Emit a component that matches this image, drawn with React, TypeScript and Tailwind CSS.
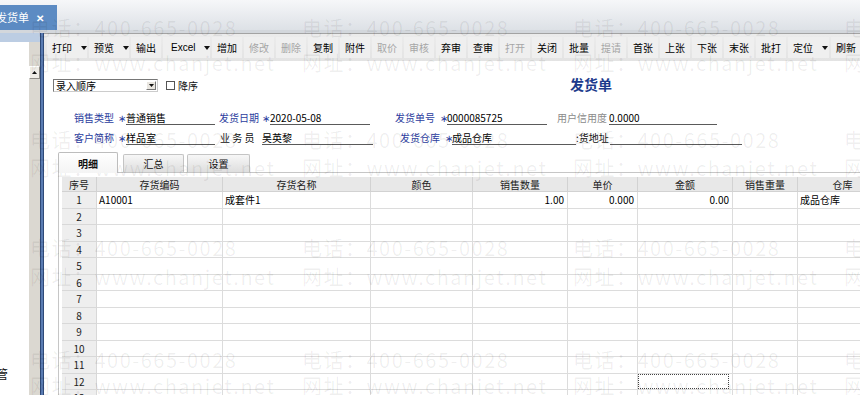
import React from "react"

type Tool = { label: string; off?: boolean; menu?: boolean; box: string; pad?: string }

const tools: Tool[] = [
  { label: "打印", menu: true, box: "w-[40px]", pad: "pl-[5px] gap-[9px]" },
  { label: "预览", menu: true, box: "w-[40px]", pad: "pl-[5px] gap-[9px]" },
  { label: "输出", box: "w-[30px]" },
  { label: "Excel", menu: true, box: "w-[47px]", pad: "pl-[8px] gap-[9px]" },
  { label: "增加", box: "w-[30px]" },
  { label: "修改", off: true, box: "w-[30px]" },
  { label: "删除", off: true, box: "w-[30px]" },
  { label: "复制", box: "w-[30px]" },
  { label: "附件", box: "w-[30px]" },
  { label: "取价", off: true, box: "w-[30px]" },
  { label: "审核", off: true, box: "w-[30px]" },
  { label: "弃审", box: "w-[30px]" },
  { label: "查审", box: "w-[30px]" },
  { label: "打开", off: true, box: "w-[30px]" },
  { label: "关闭", box: "w-[30px]" },
  { label: "批量", box: "w-[30px]" },
  { label: "提请", off: true, box: "w-[30px]" },
  { label: "首张", box: "w-[30px]" },
  { label: "上张", box: "w-[30px]" },
  { label: "下张", box: "w-[30px]" },
  { label: "末张", box: "w-[30px]" },
  { label: "批打", box: "w-[30px]" },
  { label: "定位", menu: true, box: "w-[41px]", pad: "pl-[5px] gap-[9px]" },
  { label: "刷新", box: "w-[30px]" },
]

const cols = [
  { h: "序号", w: "w-[35px]" },
  { h: "存货编码", w: "w-[126px]" },
  { h: "存货名称", w: "w-[148px]" },
  { h: "颜色", w: "w-[102px]" },
  { h: "销售数量", w: "w-[95px]" },
  { h: "单价", w: "w-[70px]" },
  { h: "金额", w: "w-[95px]" },
  { h: "销售重量", w: "w-[65px]" },
  { h: "仓库", w: "w-[90px]" },
]

const firstRow = ["A10001", "成套件1", "", "1.00", "0.000", "0.00", "", "成品仓库"]
const rightCols = [3, 4, 5]

const wmCols = ["left-[30px]", "left-[302px]", "left-[573px]", "left-[844px]"]
const wmRows = [
  { top: "top-[18px]", text: "电话：400-665-0028" },
  { top: "top-[53px]", text: "网址：www.chanjet.net" },
  { top: "top-[130px]", text: "电话：400-665-0028" },
  { top: "top-[158px]", text: "网址：www.chanjet.net" },
  { top: "top-[238px]", text: "电话：400-665-0028" },
  { top: "top-[267px]", text: "网址：www.chanjet.net" },
  { top: "top-[350px]", text: "电话：400-665-0028" },
  { top: "top-[376px]", text: "网址：www.chanjet.net" },
]

function Caret() {
  return (
    <svg width="6" height="4" viewBox="0 0 6 4" className="shrink-0">
      <polygon points="0,0 6,0 3,4" fill="#111" />
    </svg>
  )
}

function Label({ text, w, tone = "blue" }: { text: string; w: string; tone?: "blue" | "gray" | "black" }) {
  const color = tone === "blue" ? "text-[#2c3d9e]" : tone === "gray" ? "text-[#8a8a8a]" : "text-[#111]"
  return <span className={`${w} ${color} whitespace-nowrap leading-[14px]`}>{text}</span>
}

function Star({ w = "w-[8px]" }: { w?: string }) {
  return <span className={`${w} text-[#2c3d9e] leading-[14px] text-[10px]`}>∗</span>
}

function Field({ value, w }: { value: string; w: string }) {
  return (
    <span className={`${w} h-[14px] border-b border-[#5a5a5a] leading-[13px] text-black whitespace-nowrap overflow-hidden`}>
      {value}
    </span>
  )
}

export default function App() {
  return (
    <div className="relative w-[860px] h-[395px] overflow-hidden bg-white flex flex-col font-['Noto_Sans_CJK_SC','Noto_Sans',sans-serif] text-[10px] text-[#111]">
      {/* window tabs */}
      <div className="h-[30px] bg-gradient-to-b from-[#f6f7f9] to-[#dde1e6] flex items-end">
        <div className="w-[57px] h-[25px] bg-[#5c8bc3] flex items-center text-white text-[11px] overflow-hidden">
          <span className="-ml-[4px] whitespace-nowrap">发货单</span>
          <span className="ml-[7px] font-bold text-[10px]">✕</span>
        </div>
      </div>
      <div className="h-[3px] bg-[#d3d7dc]" />

      <div className="flex-1 flex min-h-0">
        {/* left nav */}
        <div className="w-[40px] flex flex-col">
          <div className="h-[9px] bg-[#bccde3]" />
          <div className="flex-1 flex">
            <div className="w-[29px] flex flex-col justify-end pb-[14px] overflow-hidden">
              <span className="-ml-[4px] text-[12px] leading-[14px]">管</span>
            </div>
            <div className="w-[11px] bg-[#dbd8d1] pt-[24px]">
              <div className="h-[13px] bg-[#efece6] border border-t-white border-l-white border-r-[#8f8c86] border-b-[#8f8c86] flex items-center justify-center">
                <svg width="5" height="3" viewBox="0 0 5 3">
                  <polygon points="0,3 5,3 2.5,0" fill="#111" />
                </svg>
              </div>
            </div>
          </div>
        </div>
        <div className="w-[4px] bg-[#5a7cb2] border-x border-[#2f4a78]" />

        {/* main */}
        <div className="flex-1 flex flex-col min-w-0">
          <div className="h-[28px] bg-gradient-to-b from-[#ececec] to-[#e3e3e3] border-t border-[#a3a3a3] flex items-center pl-[3px] whitespace-nowrap">
            {tools.map((t) => (
              <div
                key={t.label}
                className={`${t.box} h-[21px] mr-[2px] shrink-0 bg-[#efefef] flex items-center ${t.menu ? t.pad : "justify-center"} ${t.off ? "text-[#a6a6a6]" : "text-black"}`}
              >
                <span className={t.label === "Excel" ? "font-['Liberation_Sans',sans-serif]" : ""}>{t.label}</span>
                {t.menu && <Caret />}
              </div>
            ))}
          </div>

          {/* header form */}
          <div className="flex flex-col">
            <div className="mt-[18px] ml-[9px] h-[13px] flex items-center">
              <div className="w-[105px] h-[13px] border border-[#777] border-r-[#ccc] border-b-[#ccc] flex items-center justify-between pl-[2px] pr-[1px]">
                <span className="leading-[11px] text-black">录入顺序</span>
                <div className="w-[10px] h-[9px] bg-[#e9e6e0] border border-t-white border-l-white border-r-[#777] border-b-[#777] flex items-center justify-center">
                  <svg width="5" height="3" viewBox="0 0 5 3">
                    <polygon points="0,0 5,0 2.5,3" fill="#111" />
                  </svg>
                </div>
              </div>
              <div className="ml-[8px] w-[9px] h-[9px] border border-[#555] bg-white" />
              <span className="ml-[3px] w-[20px] whitespace-nowrap">降序</span>
              <span className="ml-[372px] -mt-[3px] text-[14px] font-bold text-[#1d3a8c] whitespace-nowrap">发货单</span>
            </div>

            <div className="mt-[19px] ml-[30px] h-[14px] flex items-end">
              <Label text="销售类型" w="w-[44px]" />
              <Star />
              <Field value="普通销售" w="w-[89px]" />
              <span className="w-[4px]" />
              <Label text="发货日期" w="w-[43px]" />
              <Star />
              <Field value="2020-05-08" w="w-[100px]" />
              <span className="w-[25px]" />
              <Label text="发货单号" w="w-[45px]" />
              <Star w="w-[7px]" />
              <Field value="0000085725" w="w-[100px]" />
              <span className="w-[10px]" />
              <Label text="用户信用度" w="w-[52px]" tone="gray" />
              <Field value="0.0000" w="w-[108px]" />
            </div>

            <div className="mt-[6px] ml-[30px] h-[14px] flex items-end">
              <Label text="客户简称" w="w-[44px]" />
              <Star />
              <Field value="样品室" w="w-[89px]" />
              <span className="w-[5px]" />
              <Label text="业 务 员" w="w-[42px]" tone="black" />
              <Field value="吴英黎" w="w-[111px]" />
              <span className="w-[27px]" />
              <Label text="发货仓库" w="w-[45px]" />
              <Star w="w-[7px]" />
              <Field value="成品仓库" w="w-[124px]" />
              <Label text=":货地址" w="w-[34px]" tone="black" />
              <Field value="" w="w-[132px]" />
            </div>

            {/* tabs */}
            <div className="mt-[7px] ml-[14px] h-[20px] flex items-end">
              <div className="relative z-10 -mb-px w-[60px] h-[21px] bg-gradient-to-b from-[#ffffff] to-[#f4f4f4] border border-b-0 border-[#bdbdbd] rounded-t-[2px] flex items-center justify-center font-bold">
                明细
              </div>
              <div className="ml-[5px] w-[61px] h-[18px] bg-gradient-to-b from-[#f7f7f7] to-[#dedede] border border-b-0 border-[#c4c4c4] rounded-t-[2px] flex items-center justify-center">
                汇总
              </div>
              <div className="ml-[3px] w-[63px] h-[18px] bg-gradient-to-b from-[#f7f7f7] to-[#dedede] border border-b-0 border-[#c4c4c4] rounded-t-[2px] flex items-center justify-center">
                设置
              </div>
            </div>
          </div>

          {/* grid */}
          <div className="ml-[14px] flex-1 border-t border-l border-[#c6c6c6] pt-[4px] pl-[3px] overflow-hidden">
            <div className="flex h-[15px] bg-[#e8e8e8] text-[#222]">
              {cols.map((c) => (
                <div key={c.h} className={`${c.w} shrink-0 border-r border-b border-[#d2d2d2] flex items-center justify-center`}>
                  {c.h}
                </div>
              ))}
            </div>
            {Array.from({ length: 13 }, (_, r) => (
              <div key={r} className="flex h-[16.5px]">
                {cols.map((c, ci) => {
                  if (ci === 0)
                    return (
                      <div key={ci} className={`${c.w} shrink-0 bg-[#eeeeee] border-r border-b border-[#d8d8d8] flex items-center justify-center text-[#222]`}>
                        {r + 1}
                      </div>
                    )
                  const v = r === 0 ? firstRow[ci - 1] : ""
                  const right = rightCols.includes(ci - 1)
                  return (
                    <div
                      key={ci}
                      className={`${c.w} shrink-0 border-r border-b border-[#dcdcdc] flex items-center whitespace-nowrap overflow-hidden text-black ${right ? "justify-end pr-[3px]" : "pl-[2px]"}`}
                    >
                      {r === 11 && ci === 6 ? <div className="w-full h-full -ml-[1px] border border-dotted border-[#444]" /> : v}
                    </div>
                  )
                })}
              </div>
            ))}
          </div>
        </div>
      </div>

      {/* watermark */}
      <div className="absolute inset-0 pointer-events-none">
        {wmCols.map((x) =>
          wmRows.map((r) => (
            <span
              key={x + r.top}
              className={`absolute ${x} ${r.top} whitespace-nowrap text-[20px] leading-[20px] tracking-[1.5px] text-[rgba(0,0,0,0.065)]`}
            >
              {r.text}
            </span>
          ))
        )}
      </div>
    </div>
  )
}
